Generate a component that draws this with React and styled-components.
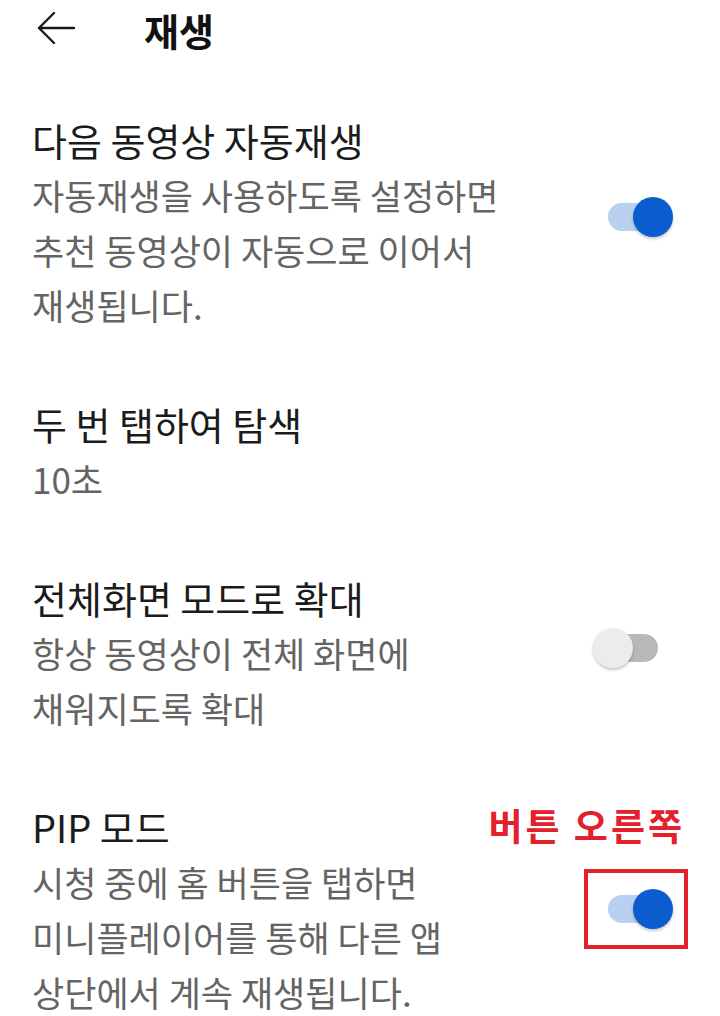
import React from "react"
import styled, { createGlobalStyle } from "styled-components"

const GlobalStyle = createGlobalStyle`
  html, body {
    margin: 0;
    padding: 0;
    background: #ffffff;
  }
  body {
    font-family: "Noto Sans CJK KR", "Noto Sans", sans-serif;
  }
`

const settings = [
  {
    title: "다음 동영상 자동재생",
    desc: ["자동재생을 사용하도록 설정하면", "추천 동영상이 자동으로 이어서", "재생됩니다."],
    toggle: true,
    on: true,
  },
  {
    title: "두 번 탭하여 탐색",
    desc: ["10초"],
  },
  {
    title: "전체화면 모드로 확대",
    desc: ["항상 동영상이 전체 화면에", "채워지도록 확대"],
    toggle: true,
    on: false,
  },
  {
    title: "PIP 모드",
    desc: ["시청 중에 홈 버튼을 탭하면", "미니플레이어를 통해 다른 앱", "상단에서 계속 재생됩니다."],
    toggle: true,
    on: true,
    note: "버튼 오른쪽",
  },
]

const BackArrow = () => (
  <svg width="40" height="34" viewBox="0 0 40 34" fill="none">
    <path
      d="M38 17H3M18 2L3 17l15 15"
      stroke="#1a1a1a"
      strokeWidth="2.4"
      strokeLinecap="round"
      strokeLinejoin="round"
    />
  </svg>
)

const Switch = ({ on, highlighted }) => (
  <SwitchBox $highlighted={highlighted}>
    <Track $on={on} />
    <Thumb $on={on} />
  </SwitchBox>
)

const App = () => {
  return (
    <Page>
      <GlobalStyle />
      <Header>
        <BackArrow />
        <HeaderTitle>재생</HeaderTitle>
      </Header>
      <List>
        {settings.map((item) => (
          <Row key={item.title}>
            <TextCol>
              <Title>{item.title}</Title>
              {item.desc.map((line) => (
                <Desc key={line}>{line}</Desc>
              ))}
            </TextCol>
            {item.toggle && <Switch on={item.on} highlighted={!!item.note} />}
            {item.note && <Note>{item.note}</Note>}
          </Row>
        ))}
      </List>
    </Page>
  )
}

const Page = styled.div`
  width: 720px;
  min-height: 1016px;
  background: #ffffff;
`

const Header = styled.header`
  height: 56px;
  display: flex;
  align-items: center;
  padding-left: 36px;
  gap: 68px;
`

const HeaderTitle = styled.h1`
  margin: 0;
  font-size: 38px;
  font-weight: 700;
  color: #111111;
  line-height: 1;
  padding-top: 3px;
`

const List = styled.div`
  padding-top: 24px;
`

const Row = styled.div`
  position: relative;
  display: flex;
  align-items: center;
  padding: 32px 47px 32px 32px;
`

const TextCol = styled.div`
  flex: 1;
  min-width: 0;
`

const Title = styled.div`
  font-size: 38px;
  line-height: 55px;
  color: #1b1b1b;
  white-space: nowrap;
`

const Desc = styled.div`
  font-size: 35px;
  line-height: 55px;
  color: #646464;
  white-space: nowrap;
`

const SwitchBox = styled.div`
  position: relative;
  flex-shrink: 0;
  width: 80px;
  height: 40px;
  margin-top: -10px;

  ${({ $highlighted }) =>
    $highlighted &&
    `
    margin-top: 0;
    &::after {
      content: "";
      position: absolute;
      top: -20px;
      bottom: -20px;
      left: -9px;
      right: -15px;
      border: 4px solid #e3202b;
    }
  `}
`

const Track = styled.div`
  position: absolute;
  top: 6px;
  bottom: 6px;
  left: 15px;
  right: 15px;
  border-radius: 14px;
  background: ${({ $on }) => ($on ? "#b9d0f1" : "#b8b8b8")};
`

const Thumb = styled.div`
  position: absolute;
  top: 0;
  left: ${({ $on }) => ($on ? "40px" : "0")};
  width: 40px;
  height: 40px;
  border-radius: 50%;
  background: ${({ $on }) => ($on ? "#0a5ccf" : "#ececec")};
  box-shadow: 0 2px 3px rgba(0, 0, 0, 0.22);
`

const Note = styled.div`
  position: absolute;
  top: 31px;
  right: 35px;
  font-size: 37px;
  line-height: 55px;
  font-weight: 700;
  color: #e3202b;
  letter-spacing: 3px;
  white-space: nowrap;
`

export default App
